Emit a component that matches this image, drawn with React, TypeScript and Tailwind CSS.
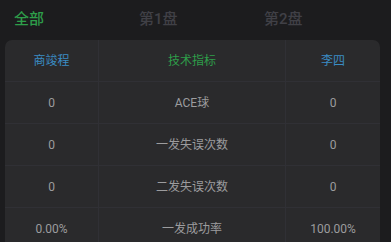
import React from 'react';

const rows = [
    { left: '0', label: 'ACE球', right: '0' },
    { left: '0', label: '一发失误次数', right: '0' },
    { left: '0', label: '二发失误次数', right: '0' },
    { left: '0.00%', label: '一发成功率', right: '100.00%' },
];

const tabs = ['全部', '第1盘', '第2盘'];

export default function App() {
    return (
        <div
            className="w-[391px] h-[242px] overflow-hidden bg-[#1c1c1e]"
            style={{ fontFamily: 'Roboto, "Noto Sans CJK SC", sans-serif' }}
        >
            {/* Tabs */}
            <div className="flex h-[38px] items-center pl-[14px]">
                {tabs.map((t, i) => (
                    <div
                        key={t}
                        className={`w-[125px] text-[15px] font-medium leading-none ${i === 0 ? 'text-[#2e9e4a]' : 'text-[#404046]'}`}
                    >
                        {t}
                    </div>
                ))}
            </div>

            {/* Table card */}
            <div className="mx-[5px] mt-[2px] w-[375px] rounded-t-[7px] bg-[#2a2a2c] text-[12px]">
                <div className="grid grid-cols-[94px_187px_94px] h-[42px] border-b border-[#303035]">
                    <div className="flex items-center justify-center border-r border-[#303035] text-[#3a8cc4]">商竣程</div>
                    <div className="flex items-center justify-center border-r border-[#303035] text-[#2e9e4a]">技术指标</div>
                    <div className="flex items-center justify-center text-[#3a8cc4]">李四</div>
                </div>
                {rows.map((r) => (
                    <div
                        key={r.label}
                        className="grid grid-cols-[94px_187px_94px] h-[42px] border-b border-[#303035] text-[#9c9c9e]"
                    >
                        <div className="flex items-center justify-center border-r border-[#303035]">{r.left}</div>
                        <div className="flex items-center justify-center border-r border-[#303035]">{r.label}</div>
                        <div className="flex items-center justify-center">{r.right}</div>
                    </div>
                ))}
            </div>
        </div>
    );
}
